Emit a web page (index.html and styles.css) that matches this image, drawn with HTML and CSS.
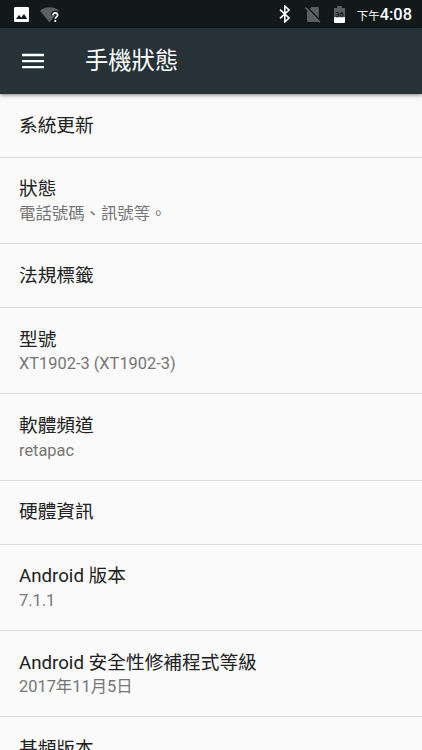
FILE: index.html
```html
<!DOCTYPE html>
<html lang="zh-Hant">
<head>
<meta charset="utf-8">
<title>手機狀態</title>
<link rel="stylesheet" href="styles.css">
</head>
<body>
<div class="status">
  <svg class="photo" viewBox="0 0 15 15"><rect width="15" height="15" rx="1.2" fill="#fff"/><path d="M2 12l3-4 2.2 2.6L10 7l3.2 5z" fill="#13181b"/></svg>
  <svg class="wifi" viewBox="0 0 20 16"><path d="M0 3.8C5.3-.8 13.7-.8 19 3.8L9.5 15.4z" fill="#5b5f61"/><path d="M12.7 8.3c0-3.5 5.4-3.4 5.2 0-.1 1.8-2.5 1.9-2.5 4" fill="none" stroke="#13181b" stroke-width="4"/><path d="M12.9 8.2c0-3.1 4.9-3 4.7 0-.1 1.7-2.3 1.8-2.3 3.5M15.3 13v2" fill="none" stroke="#fff" stroke-width="1.7"/></svg>
  <span class="spacer"></span>
  <svg class="bluetooth" viewBox="0 0 12 18"><path d="M1 4.7l9 8.3-4.2 4V1L10 5l-9 8.3" fill="none" stroke="#fff" stroke-width="1.6"/></svg>
  <svg class="sim" viewBox="0 0 16 17"><path d="M6.5 1H12.6a1.2 1.2 0 0 1 1.2 1.2V14.8a1.2 1.2 0 0 1-1.2 1.2H3.2A1.2 1.2 0 0 1 2 14.8V5.5z" fill="#5b5f61"/><path d="M1.4 1.1L15.6 15.6" stroke="#13181b" stroke-width="2.6"/><path d="M.5 1.5l14.5 14.8" stroke="#6a6e70" stroke-width="1.3"/></svg>
  <svg class="battery" viewBox="0 0 11 17"><path d="M3.2 0h4.6v2H11v10H0V2h3.2z" fill="#5b5f61"/><path d="M0 11.3h11V16a1 1 0 0 1-1 1H1a1 1 0 0 1-1-1z" fill="#fff"/><text x="5.5" y="10.5" text-anchor="middle" class="level">36</text></svg>
  <span class="clock"><small>下午</small>4:08</span>
</div>
<header class="bar">
  <svg class="menu" viewBox="0 0 22 16"><path d="M0 2h22M0 8.1h22M0 14.2h22" stroke="#fff" stroke-width="2.3"/></svg>
  <h1>手機狀態</h1>
</header>
<ul class="list">
  <li><h2>系統更新</h2></li>
  <li class="two"><h2>狀態</h2><p>電話號碼、訊號等。</p></li>
  <li><h2>法規標籤</h2></li>
  <li class="two"><h2>型號</h2><p>XT1902-3 (XT1902-3)</p></li>
  <li class="two"><h2>軟體頻道</h2><p>retapac</p></li>
  <li><h2>硬體資訊</h2></li>
  <li class="two"><h2>Android 版本</h2><p>7.1.1</p></li>
  <li class="two"><h2>Android 安全性修補程式等級</h2><p>2017年11月5日</p></li>
  <li class="two"><h2>基頻版本</h2></li>
</ul>
</body>
</html>
```
FILE: styles.css
```css
* { box-sizing: border-box; margin: 0; padding: 0; }
body {
  height: 750px;
  overflow: hidden;
  display: flex;
  flex-direction: column;
  background: #fafafa;
  font-family: Roboto, "Noto Sans CJK TC", sans-serif;
}
svg { display: block; flex: none; }
.status {
  flex: none;
  height: 28px;
  display: flex;
  align-items: flex-start;
  padding: 0 10px 0 14px;
  background: #13181b;
  color: #fff;
}
.photo { width: 15px; height: 15px; margin-top: 7px; }
.wifi { width: 20px; height: 16px; margin: 7px 0 0 11px; }
.spacer { flex: 1; }
.bluetooth { width: 12px; height: 18px; margin: 5px 14px 0 0; }
.sim { width: 16px; height: 17px; margin: 6px 13px 0 0; }
.battery { width: 11px; height: 17px; margin: 6px 12px 0 0; }
.level { font: 700 7.5px Roboto, sans-serif; fill: #13181b; }
.clock { font-size: 16.4px; font-weight: 500; line-height: 29px; white-space: nowrap; }
.clock small { font-size: 11.5px; font-weight: 400; }
.bar {
  flex: none;
  position: relative;
  height: 66px;
  display: flex;
  align-items: center;
  padding-left: 22px;
  background: #263238;
  box-shadow: 0 1px 4px rgba(0, 0, 0, .5);
}
.menu { width: 22px; height: 16px; }
.bar h1 { margin-left: 41px; color: #fff; font-size: 23.3px; font-weight: 400; line-height: 34px; }
.list { list-style: none; }
.list li {
  height: 63.8px;
  padding: 19.7px 19px 0;
  border-bottom: 1px solid #d9d9d9;
}
.list .two { height: 86.4px; }
.list h2 { color: #212121; font-size: 18.7px; font-weight: 400; line-height: 24.6px; white-space: nowrap; }
.list p { color: #757575; font-size: 16.4px; line-height: 24px; white-space: nowrap; }
```
